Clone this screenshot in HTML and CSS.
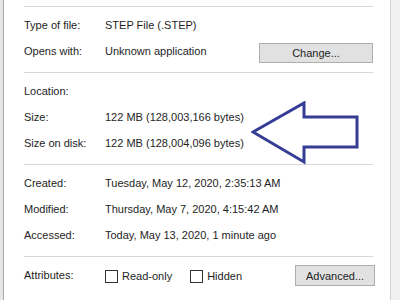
FILE: index.html
```html
<!DOCTYPE html>
<html lang="en">
<head>
  <meta charset="UTF-8">
  <title>Properties</title>
  <link rel="stylesheet" href="styles.css">
</head>
<body>
  <div class="window">
    <div class="panel">
      <hr class="sep">
      <div class="section">
        <div class="row"><span class="label">Type of file:</span><span class="value">STEP File (.STEP)</span></div>
        <div class="row">
          <span class="label">Opens with:</span><span class="value">Unknown application</span>
          <button class="btn btn-change">Change...</button>
        </div>
      </div>
      <hr class="sep">
      <div class="section size-section">
        <div class="row"><span class="label">Location:</span><span class="value"></span></div>
        <div class="row"><span class="label">Size:</span><span class="value">122 MB (128,003,166 bytes)</span></div>
        <div class="row"><span class="label">Size on disk:</span><span class="value">122 MB (128,004,096 bytes)</span></div>
        <!-- arrow pointing at the size rows -->
        <svg class="arrow" width="112" height="66" viewBox="0 0 112 66">
          <polygon points="2,31 53,2 53,16 106,16 106,46 53,46 53,61" fill="none" stroke="#363d95" stroke-width="3" stroke-linejoin="miter"/>
        </svg>
      </div>
      <hr class="sep">
      <div class="section">
        <div class="row"><span class="label">Created:</span><span class="value">Tuesday, May 12, 2020, 2:35:13 AM</span></div>
        <div class="row"><span class="label">Modified:</span><span class="value">Thursday, May 7, 2020, 4:15:42 AM</span></div>
        <div class="row"><span class="label">Accessed:</span><span class="value">Today, May 13, 2020, 1 minute ago</span></div>
      </div>
      <hr class="sep">
      <div class="section">
        <div class="row">
          <span class="label">Attributes:</span>
          <label class="check"><span class="box"></span>Read-only</label>
          <label class="check check-hidden"><span class="box"></span>Hidden</label>
          <button class="btn btn-advanced">Advanced...</button>
        </div>
      </div>
    </div>
    <div class="edge"></div>
  </div>
</body>
</html>
```

FILE: styles.css
```css
body {
  margin: 0;
  background-color: #ffffff;
  font-family: "Liberation Sans", Arial, sans-serif;
  font-size: 11px;
  color: #1e1e1e;
}
.window {
  display: flex;
  width: 400px;
  height: 300px;
  overflow: hidden;
  background-color: #ffffff;
  border-left: 3px solid #e6e6e6;
  box-sizing: border-box;
}
.panel {
  flex: 1;
  border-left: 1px solid #a8a8a8;
  padding: 6px 0 0 20px;
}
.edge {
  width: 9px;
  background-color: #f0f0f0;
  border-left: 1px solid #d4d4d4;
}
.sep {
  width: 349px;
  margin: 0;
  border: none;
  border-top: 1px solid #d9d9d9;
}
.section {
  position: relative;
  width: 353px;
  padding: 5px 0 8px 0;
}
.row {
  display: flex;
  align-items: center;
  height: 26px;
}
.label {
  width: 81px;
  flex: none;
}
.value {
  white-space: nowrap;
}
.btn {
  font-family: inherit;
  font-size: 11px;
  color: #1e1e1e;
  background-color: #e1e1e1;
  border: 1px solid #adadad;
  border-radius: 0;
  padding: 0;
}
.btn-change {
  margin-left: auto;
  margin-right: 4px;
  margin-top: 4px;
  width: 114px;
  height: 20px;
}
.btn-advanced {
  margin-left: auto;
  margin-right: 2px;
  margin-top: 1px;
  width: 80px;
  height: 21px;
}
.check {
  display: flex;
  align-items: center;
  margin-top: 2px;
}
.check-hidden {
  margin-left: 18px;
}
.box {
  width: 11px;
  height: 11px;
  border: 1px solid #333333;
  background-color: #ffffff;
  margin-right: 4px;
}
.arrow {
  position: absolute;
  left: 227px;
  top: 28px;
}
```
